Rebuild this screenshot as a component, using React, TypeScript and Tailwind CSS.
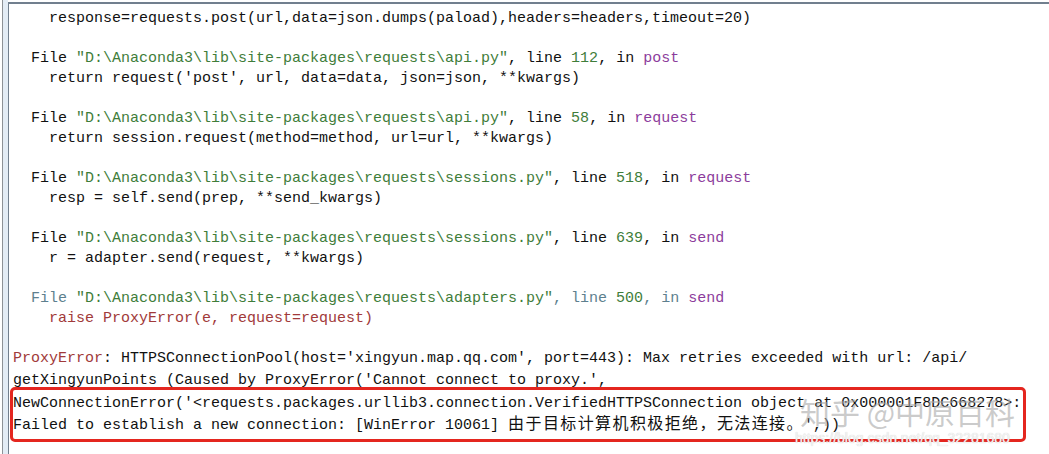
type Seg = [string, string];

const K = "text-[#111111]";
const G = "text-[#3f7d3a]";
const P = "text-[#8c3c9c]";
const R = "text-[#a13a3a]";
const B = "text-[#5d7f8e]";

const trace: (Seg[] | null)[] = [
  [[K, "    response=requests.post(url,data=json.dumps(paload),headers=headers,timeout=20)"]],
  null,
  [[K, "  File "], [G, "\"D:\\Anaconda3\\lib\\site-packages\\requests\\api.py\""], [K, ", line "], [G, "112"], [K, ", in "], [P, "post"]],
  [[K, "    return request('post', url, data=data, json=json, **kwargs)"]],
  null,
  [[K, "  File "], [G, "\"D:\\Anaconda3\\lib\\site-packages\\requests\\api.py\""], [K, ", line "], [G, "58"], [K, ", in "], [P, "request"]],
  [[K, "    return session.request(method=method, url=url, **kwargs)"]],
  null,
  [[K, "  File "], [G, "\"D:\\Anaconda3\\lib\\site-packages\\requests\\sessions.py\""], [K, ", line "], [G, "518"], [K, ", in "], [P, "request"]],
  [[K, "    resp = self.send(prep, **send_kwargs)"]],
  null,
  [[K, "  File "], [G, "\"D:\\Anaconda3\\lib\\site-packages\\requests\\sessions.py\""], [K, ", line "], [G, "639"], [K, ", in "], [P, "send"]],
  [[K, "    r = adapter.send(request, **kwargs)"]],
  null,
  [[B, "  File "], [G, "\"D:\\Anaconda3\\lib\\site-packages\\requests\\adapters.py\""], [B, ", line "], [G, "500"], [B, ", in "], [P, "send"]],
  [[R, "    raise ProxyError(e, request=request)"]],
  null,
];

function Line({ segs }: { segs: Seg[] | null }) {
  return (
    <div className="h-[20px] leading-[20px] whitespace-pre">
      {segs ? segs.map(([c, t], i) => <span key={i} className={c}>{t}</span>) : " "}
    </div>
  );
}

export default function App() {
  return (
    <div className="w-[1049px] h-[454px] bg-white overflow-hidden relative flex">
      <div className="w-[2px] bg-white" />
      <div className="w-[1px] bg-[#8d9196]" />
      <div className="w-[5px] bg-[#e3ecf5]" />
      <div className="flex-1 mt-[2px] border-t-2 border-l border-[#717f8e] pt-[5px] pl-[4px] text-[15px] font-['Liberation_Mono','Noto_Sans_CJK_SC',monospace]">
        {trace.map((segs, i) => (
          <Line key={i} segs={segs} />
        ))}

        <div className="leading-[22px] whitespace-pre -mt-[1px]">
          <div>
            <span className={R}>ProxyError</span>
            <span className={K}>: HTTPSConnectionPool(host='xingyun.map.qq.com', port=443): Max retries exceeded with url: /api/</span>
          </div>
          <div className={K}>getXingyunPoints (Caused by ProxyError('Cannot connect to proxy.',</div>
          <div className={`-ml-[3px] -mt-[5px] pt-[3px] w-[1016px] border-[3px] border-[#e4261f] rounded-[5px] pb-[3px] ${K}`}>
            <div className="h-[22px]">NewConnectionError('&lt;requests.packages.urllib3.connection.VerifiedHTTPSConnection object at 0x000001F8DC668278&gt;:</div>
            <div className="h-[21px]">
              Failed to establish a new connection: [WinError 10061]{" "}
              <span className="text-[16px] leading-[0px] tracking-[1.4px] font-['Noto_Sans_CJK_SC',sans-serif]">由于目标计算机积极拒绝，无法连接。</span>
              ',))
            </div>
          </div>
        </div>
      </div>

      <div className="absolute left-[800px] top-[394px] text-[30px] leading-[34px] text-[#a8a8a8]/60 font-['Noto_Sans_CJK_SC',sans-serif] whitespace-pre">
        知乎 @中原百科
      </div>
      <div className="absolute left-[795px] top-[430px] text-[14px] leading-[16px] text-[#f4f4f4] font-['Liberation_Sans',sans-serif] [text-shadow:0_0_1px_#c9c9c9] whitespace-pre">
        https://blog.csdn.net/qq_32281680
      </div>
    </div>
  );
}
